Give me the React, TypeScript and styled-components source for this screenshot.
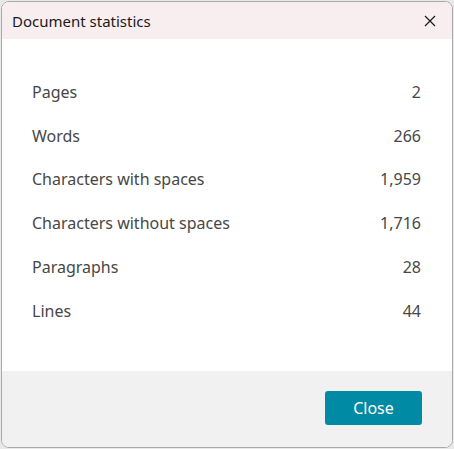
import React from 'react'
import styled, { createGlobalStyle } from 'styled-components'

const GlobalStyle = createGlobalStyle`
    html, body {
        margin: 0;
        padding: 0;
        background: #e9e9e9;
    }

    body {
        font-family: "Noto Sans", "Open Sans", sans-serif;
    }
`

const Backdrop = styled.div`
    width: 454px;
    height: 449px;
    padding: 1px;
    box-sizing: border-box;
`

const Dialog = styled.div`
    height: 100%;
    display: flex;
    flex-direction: column;
    border: 1px solid #a9a9a9;
    border-radius: 8px;
    overflow: hidden;
    background: #ffffff;
    box-sizing: border-box;
`

const Header = styled.div`
    height: 37px;
    flex: none;
    display: flex;
    align-items: center;
    justify-content: space-between;
    padding: 0 12px 0 10px;
    background: #f8eeef;
`

const Title = styled.h1`
    margin: 0;
    font-size: 15px;
    font-weight: 400;
    color: #1a1a1a;
`

const CloseIcon = styled.button`
    width: 20px;
    height: 20px;
    padding: 0;
    border: none;
    background: none;
    display: flex;
    align-items: center;
    justify-content: center;
    cursor: pointer;
`

const Body = styled.div`
    flex: 1;
    padding: 31px 31px 0 30px;
    display: flex;
    flex-direction: column;
`

const Row = styled.div`
    height: 43.8px;
    display: flex;
    align-items: center;
    justify-content: space-between;
    font-size: 16px;
    color: #474747;
`

const Footer = styled.div`
    height: 76px;
    flex: none;
    background: #f1f1f1;
    display: flex;
    justify-content: flex-end;
    align-items: flex-start;
    padding: 20px 30px 0 0;
    box-sizing: border-box;
`

const PrimaryButton = styled.button`
    width: 97px;
    height: 34px;
    border: none;
    border-radius: 3px;
    background: #008aa3;
    color: #ffffff;
    font-family: inherit;
    font-size: 16px;
    cursor: pointer;
`

const stats = [
    { label: 'Pages', value: '2' },
    { label: 'Words', value: '266' },
    { label: 'Characters with spaces', value: '1,959' },
    { label: 'Characters without spaces', value: '1,716' },
    { label: 'Paragraphs', value: '28' },
    { label: 'Lines', value: '44' },
]

export default function App() {
    return (
        <>
            <GlobalStyle />
            <Backdrop>
                <Dialog>
                    <Header>
                        <Title>Document statistics</Title>
                        <CloseIcon aria-label="Close">
                            <svg width="12" height="12" viewBox="0 0 12 12">
                                <path d="M1 1 L11 11 M11 1 L1 11" stroke="#1a1a1a" strokeWidth="1.2" />
                            </svg>
                        </CloseIcon>
                    </Header>
                    <Body>
                        {stats.map((s) => (
                            <Row key={s.label}>
                                <span>{s.label}</span>
                                <span>{s.value}</span>
                            </Row>
                        ))}
                    </Body>
                    <Footer>
                        <PrimaryButton>Close</PrimaryButton>
                    </Footer>
                </Dialog>
            </Backdrop>
        </>
    )
}
